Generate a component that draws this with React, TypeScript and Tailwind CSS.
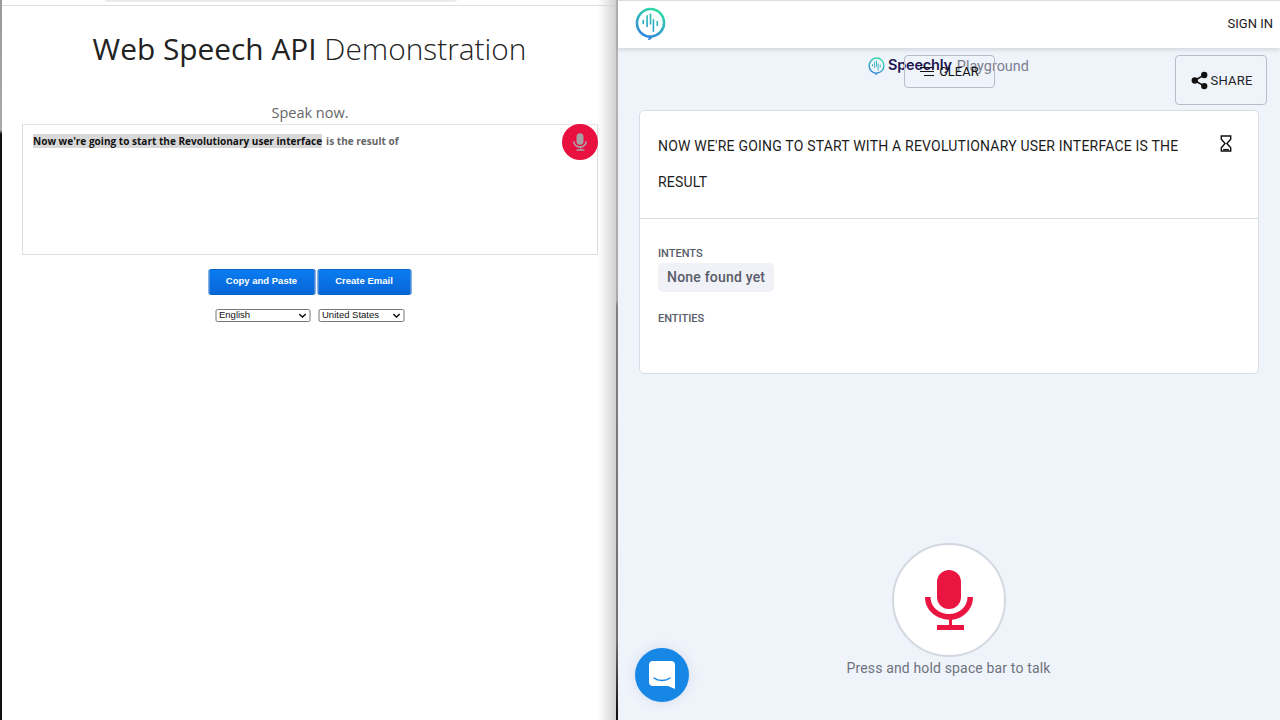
import { Share2 } from "lucide-react";

const Logo = ({ id, className }: { id: string; className: string }) => (
  <svg viewBox="0 0 32 34" className={className} fill="none">
    <defs>
      <linearGradient id={id} gradientUnits="userSpaceOnUse" x1="24" y1="1" x2="8" y2="32">
        <stop offset="0" stopColor="#2fe0a0" />
        <stop offset="1" stopColor="#2f7fe0" />
      </linearGradient>
    </defs>
    <path d="M16 30.500C8 30.500 2 24 2 16.500S8 2 16 2s14 6.500 14 14.500c0 7-5.500 13-12.500 13.800l-2 1.700z" stroke={`url(#${id})`} strokeWidth="2.600" />
    <g stroke={`url(#${id})`} strokeWidth="1.700" strokeLinecap="round">
      <path d="M8.500 14v3" />
      <path d="M12.500 9v11" />
      <path d="M16 7.500v10" />
      <path d="M19 13v12" />
      <path d="M23 15v4" />
    </g>
  </svg>
);

const Mic = ({ className }: { className: string }) => (
  <svg viewBox="0 0 48 60" className={className} fill="currentColor">
    <rect x="12" y="0" width="24" height="39" rx="12" />
    <path d="M0 27h5.500c0 10 8.500 17 18.500 17s18.500-7 18.500-17H48c0 12.500-9.500 21.500-21 22.800V55h12v5H12v-5h12v-5.200C9.500 48.500 0 39.500 0 27z" />
  </svg>
);

const Hourglass = () => (
  <svg viewBox="0 0 12 18" className="h-[17px] w-3" fill="none" stroke="#111" strokeWidth="1.500">
    <path d="M1 1h10v3.500L7 9l4 4.500V17H1v-3.500L5 9 1 4.500z" />
    <path d="M3 15.500h6" />
  </svg>
);

const Chevron = () => (
  <svg viewBox="0 0 10 6" className="h-[5px] w-2" fill="none" stroke="#111" strokeWidth="1.800">
    <path d="M1 1l4 4 4-4" />
  </svg>
);

export default function App() {
  return (
    <div className="flex h-[720px] w-[1280px] overflow-hidden bg-white font-['Open_Sans',sans-serif]">
      <div className="w-[2px] shrink-0 bg-[linear-gradient(to_bottom,#999_0,#aaa_130px,#111_134px,#111_100%)]" />

      {/* left window */}
      <div className="relative flex w-[614px] shrink-0 flex-col items-center bg-white">
        <div className="absolute left-[103px] top-0 h-[2px] w-[352px] rounded-b bg-[#ececec]" />
        <div className="h-[6px] w-full border-b border-[#dedede]" />
        <h1 className="mt-[21px] translate-x-[0.5px] text-[29.850px] leading-[44px] font-light text-[#222]">
          <span className="font-normal">Web Speech API</span> Demonstration
        </h1>
        <p className="mt-[32px] translate-x-[1px] text-[14.500px] leading-5 text-[#666]">Speak now.</p>
        <div className="relative mt-[1px] h-[131px] w-[576px] translate-x-[1px] border border-[#ddd] border-t-[#e4e4e4] px-[10px] pt-[8px] text-[10.060px] leading-[16px] font-bold">
          <span className="bg-[#d8d8d8] text-[#111]">Now we're going to start the Revolutionary user interface</span>
          <span className="ml-[4px] text-[#666]">is the result of</span>
          <div className="absolute -right-px -top-px flex h-[36px] w-[36px] items-center justify-center rounded-full bg-[#e9113f] text-[#a8a0a4]">
            <Mic className="h-[18px] w-[14px]" />
          </div>
        </div>
        <div className="mt-[14px] flex translate-x-[0.5px] gap-[2px] font-['Liberation_Sans',sans-serif] text-[9.500px] font-bold text-white">
          <button className="h-[26px] w-[107px] rounded-[2px] border border-[#0a62c4] bg-gradient-to-b from-[#0a7cf2] to-[#0766d6] pb-[1px]">Copy and Paste</button>
          <button className="h-[26px] w-[94px] rounded-[2px] border border-[#0a62c4] bg-gradient-to-b from-[#0a7cf2] to-[#0766d6] pb-[1px]">Create Email</button>
        </div>
        <div className="mt-[14px] flex translate-x-[0.5px] gap-2 font-['Liberation_Sans',sans-serif] text-[9.500px] text-[#111]">
          <div className="flex h-[13px] w-[95px] items-center justify-between rounded-[2px] border border-[#777] px-[3px]">
            English
            <Chevron />
          </div>
          <div className="flex h-[13px] w-[86px] items-center justify-between rounded-[2px] border border-[#777] px-[3px]">
            United States
            <Chevron />
          </div>
        </div>
        <div className="absolute inset-y-0 right-0 w-[18px] bg-gradient-to-r from-white/0 to-[#d2d2d2]" />
      </div>

      <div className="w-[2px] shrink-0 bg-[linear-gradient(to_bottom,#b4b4b4_0,#aaa_300px,#808080_306px,#707070_640px,#111_715px)]" />

      {/* right window */}
      <div className="relative flex flex-1 flex-col bg-[#eff4fb] font-['Roboto',sans-serif]">
        <header className="flex h-[48px] items-center justify-between border-t border-[#ddd] bg-white pl-[17px] pr-[7px] shadow-[0_2px_4px_rgba(0,0,0,0.12)]">
          <Logo id="logo-nav" className="h-[33px] w-[31px] -translate-y-[1px]" />
          <span className="-translate-y-[1px] text-[13px] text-[#1b1b1b]">SIGN IN</span>
        </header>

        {/* brand sits behind the clear button in the capture */}
        <div className="absolute left-[250px] top-[55px] flex items-center">
          <Logo id="logo-brand" className="h-[18px] w-[17px]" />
          <span className="ml-[3px] -translate-y-[1px] font-['Inter',sans-serif] text-[14.500px] font-semibold tracking-[-0.2px] text-[#1e1450]">Speechly</span>
          <span className="ml-[5px] translate-y-[1px] text-[14.400px] text-[#7b7d8f]">Playground</span>
        </div>

        <div className="flex h-[62px] justify-end pr-[13px] pt-[7px]">
          <button className="relative flex h-[50px] w-[92px] items-center justify-center gap-[2px] rounded-[4px] border border-[#b8bcc6] text-[13px] tracking-[0.2px] text-[#222]">
            <Share2 className="h-[19px] w-[19px] fill-[#111] text-[#111]" strokeWidth={2} />
            <span className="translate-y-[1px]">SHARE</span>
          </button>
        </div>
        <button className="absolute left-[286px] top-[55px] flex h-[33px] w-[91px] items-center justify-center gap-[5px] rounded-[4px] border border-[#b8bcc6] text-[13px] text-[#111]">
          <span className="flex w-[14px] flex-col items-end gap-[2.500px]">
            <span className="h-[1.500px] w-[14px] bg-[#111]" />
            <span className="h-[1.500px] w-[14px] bg-[#111]" />
            <span className="h-[1.500px] w-[10px] bg-[#111]" />
          </span>
          CLEAR
        </button>

        <section className="ml-[21px] h-[264px] w-[620px] rounded-[5px] border border-[#d8dde5] bg-white">
          <div className="flex h-[108px] justify-between border-b border-[#d8dde5] pl-[18px] pr-[26px] pt-[17px]">
            <p className="w-[530px] text-[14px] leading-[36px] tracking-[0.2px] text-[#1c1c1c]">
              NOW WE'RE GOING TO START WITH A REVOLUTIONARY USER INTERFACE IS THE RESULT
            </p>
            <div className="pt-[7px]"><Hourglass /></div>
          </div>
          <div className="px-[18px] pt-[28px]">
            <h3 className="text-[11px] leading-[14px] font-medium text-[#585c69]">INTENTS</h3>
            <span className="mt-[2px] inline-block h-[29px] rounded-[5px] bg-[#f1f2f8] px-[9px] text-[14px] leading-[29px] font-medium tracking-[0.2px] text-[#585c69]">None found yet</span>
            <h3 className="mt-[20px] text-[11px] leading-[14px] font-medium text-[#585c69]">ENTITIES</h3>
          </div>
        </section>

        <div className="mt-[169px] flex flex-col items-center pr-[1px]">
          <div className="flex h-[114px] w-[114px] items-center justify-center rounded-full border-2 border-[#d3d8e0] bg-white text-[#ea1540]">
            <Mic className="h-[60px] w-[48px]" />
          </div>
          <p className="mt-[1px] text-[14px] leading-5 tracking-[0.15px] text-[#6f727c]">Press and hold space bar to talk</p>
        </div>

        <div className="absolute left-[17px] top-[648px] flex h-[54px] w-[54px] items-center justify-center rounded-full bg-[#1787e6] shadow-[0_0_12px_rgba(30,60,120,0.12)]">
          <svg viewBox="0 0 26 28" className="h-[28px] w-[26px]">
            <path d="M4 0h18a4 4 0 0 1 4 4v24l-7-3H4a4 4 0 0 1-4-4V4a4 4 0 0 1 4-4z" fill="#fff" />
            <path d="M5 17c4 3.200 12 3.200 16 0" fill="none" stroke="#1787e6" strokeWidth="1.500" strokeLinecap="round" />
          </svg>
        </div>
      </div>
    </div>
  );
}
